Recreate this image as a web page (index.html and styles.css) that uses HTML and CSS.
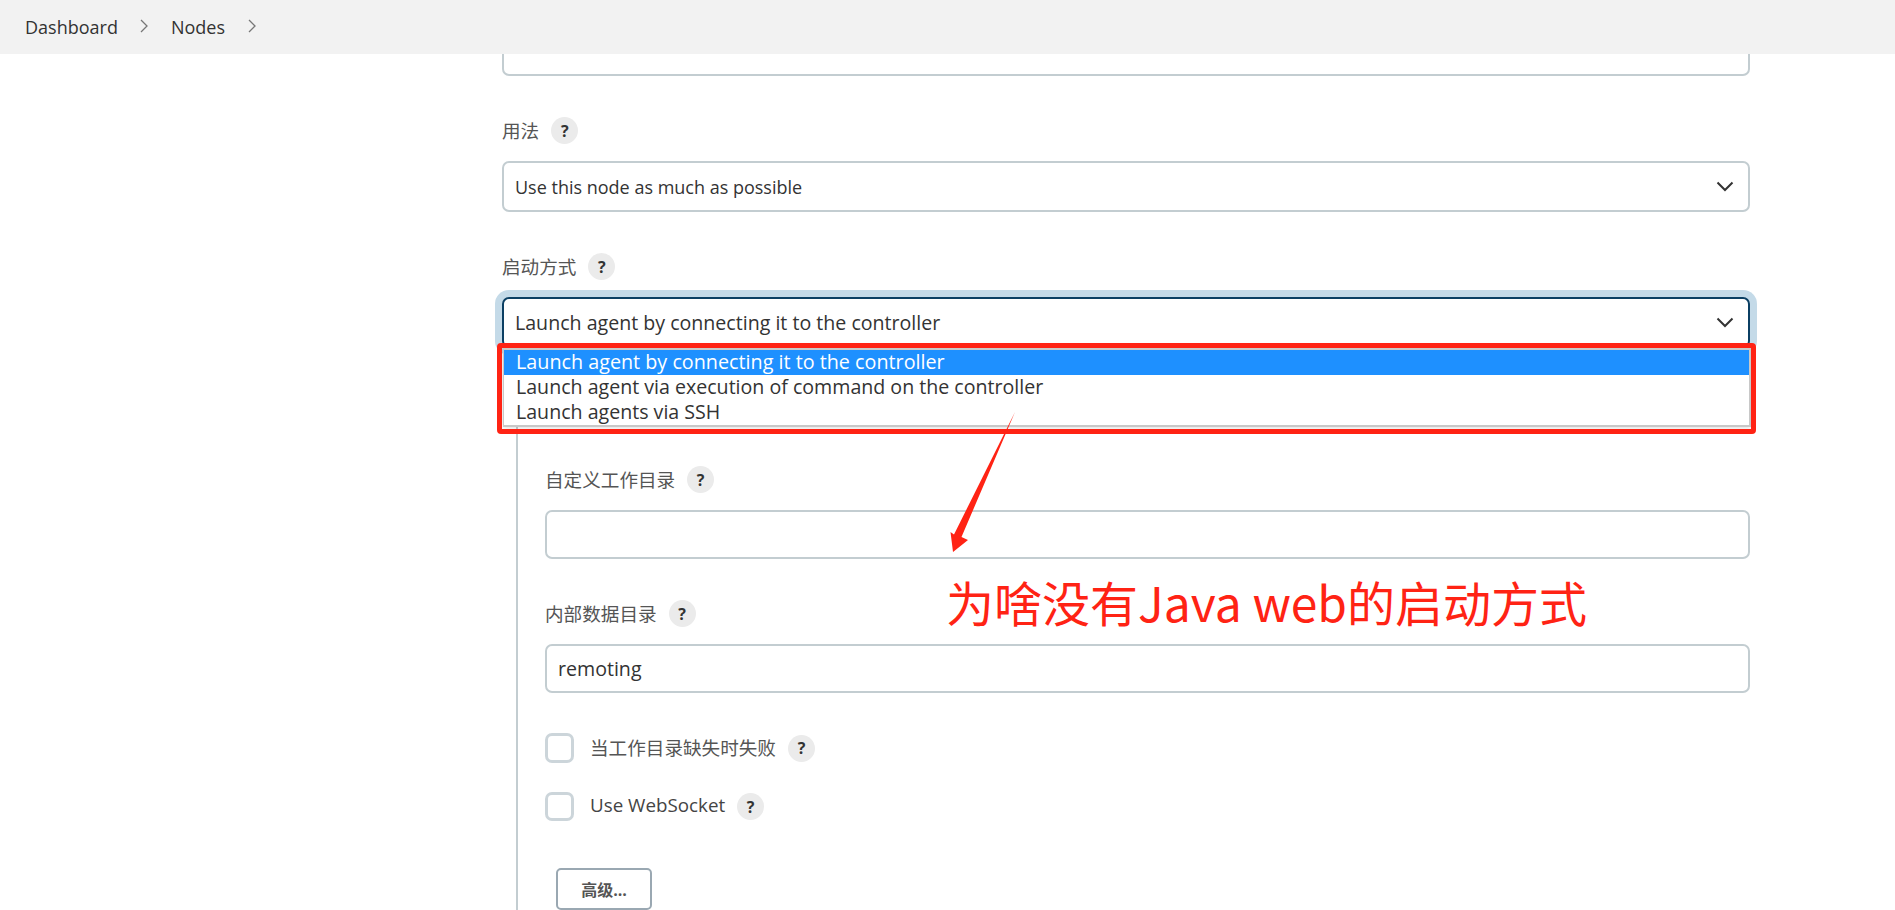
FILE: index.html
```html
<!DOCTYPE html>
<html lang="zh">
<head>
<meta charset="utf-8">
<title>Nodes</title>
<link rel="stylesheet" href="styles.css">
</head>
<body>
<header class="crumbs">
  <a class="crumb">Dashboard</a>
  <svg class="sep" viewBox="0 0 8 14"><path d="M1 1l6 6-6 6"/></svg>
  <a class="crumb">Nodes</a>
  <svg class="sep" viewBox="0 0 8 14"><path d="M1 1l6 6-6 6"/></svg>
</header>
<main class="form">
  <div class="control cut"></div>

  <div class="label-row"><span class="label">用法</span><span class="help">?</span></div>
  <div class="control select">
    <span>Use this node as much as possible</span>
    <svg class="chev" viewBox="0 0 18 11"><path d="M1.5 1.5L9 9l7.5-7.5"/></svg>
  </div>

  <div class="label-row"><span class="label">启动方式</span><span class="help">?</span></div>
  <div class="select-wrap">
    <div class="control select focus">
      <span class="wide">Launch agent by connecting it to the controller</span>
      <svg class="chev" viewBox="0 0 18 11"><path d="M1.5 1.5L9 9l7.5-7.5"/></svg>
    </div>
    <ul class="dropdown">
      <li class="on">Launch agent by connecting it to the controller</li>
      <li>Launch agent via execution of command on the controller</li>
      <li>Launch agents via SSH</li>
    </ul>
  </div>

  <section class="nested">
    <div class="label-row first"><span class="label">自定义工作目录</span><span class="help">?</span></div>
    <div class="control short"></div>

    <div class="label-row"><span class="label">内部数据目录</span><span class="help">?</span></div>
    <div class="control short value">remoting</div>

    <div class="check-row one"><span class="box"></span><span class="label">当工作目录缺失时失败</span><span class="help">?</span></div>
    <div class="check-row two"><span class="box"></span><span class="label latin">Use WebSocket</span><span class="help">?</span></div>

    <button class="adv" type="button">高级...</button>
  </section>
</main>

<div class="marks">
  <div class="red-box"></div>
  <svg class="arrow" viewBox="0 0 1895 910"><polygon points="1015,412 961.5,537 968,540 953,552 950.5,532 954,534.5"/></svg>
  <div class="note">为啥没有Java web的启动方式</div>
</div>
</body>
</html>
```
FILE: styles.css
```css
* { box-sizing: border-box; }
html, body { margin: 0; height: 910px; overflow: hidden; background: #fff; }
body {
  position: relative;
  font-family: "Open Sans", "Noto Sans CJK SC", sans-serif;
  font-size: 18px;
  color: #333;
}
.crumbs {
  position: relative;
  z-index: 2;
  height: 54px;
  background: #f2f2f2;
  display: flex;
  align-items: center;
  padding-left: 25px;
}
.crumb { color: #333; font-size: 18px; }
.sep { width: 8px; height: 14px; margin: 0 22.5px 2px; flex: none; }
.sep path { fill: none; stroke: #777; stroke-width: 1.3; }

.form { width: 1248px; margin: -29px 0 0 502px; }
.control {
  height: 51px;
  border: 2px solid #c3cdd1;
  border-radius: 7px;
  background: #fff;
  display: flex;
  align-items: center;
  padding: 0 11px;
}
.select { justify-content: space-between; }
.wide, .value, .dropdown li { font-size: 19.6px; }
.chev { width: 18px; height: 11px; margin-right: 3px; }
.chev path { fill: none; stroke: #333; stroke-width: 2; }
.focus { border-color: #0b3f63; box-shadow: 0 0 0 7px #c4dae8; }

.label-row { display: flex; align-items: center; height: 27px; margin: 41px 0 17px; }
.label { font-size: 18.6px; color: #555; position: relative; top: -1px; }
.help {
  width: 27px; height: 27px; margin-left: 12px; border-radius: 50%;
  background: #ebebeb; color: #333; font-size: 16px; font-weight: 700;
  display: flex; align-items: center; justify-content: center;
}

.select-wrap { position: relative; }
.dropdown {
  position: absolute; z-index: 1;
  top: 51px; left: 1px; right: -1px;
  margin: 0; padding: 0; list-style: none;
  background: #fff;
  border: 2px solid #c8c8c8;
  border-left-width: 1px;
  box-shadow: 0 0 6px rgba(0, 0, 0, .18);
}
.dropdown li { height: 25px; line-height: 24px; padding-left: 12px; white-space: nowrap; }
.dropdown .on { background: #1e90ff; color: #fff; font-size: 19.75px; }

.nested { margin-left: 14px; padding-left: 27px; border-left: 2px solid #c3cdd1; height: 562px; overflow: hidden; }
.label-row.first { margin-top: 118px; }
.short { height: 49px; }
.check-row { display: flex; align-items: center; }
.check-row .label { top: -2px; }
.check-row .latin { font-size: 18.8px; color: #444; }
.check-row.one { margin-top: 40px; height: 30px; }
.check-row.two { margin-top: 29px; height: 29px; }
.box { width: 29px; height: 100%; border: 3px solid #ccd5da; border-radius: 7px; margin-right: 16px; flex: none; }
.adv {
  display: block;
  margin: 47px 0 0 11px;
  width: 96px; height: 42px;
  border: 2px solid #9aa8b2; border-radius: 5px;
  background: #fff; color: #555;
  font: 700 16px "Open Sans", "Noto Sans CJK SC", sans-serif;
  padding: 0;
}

.marks { position: absolute; inset: 0; z-index: 3; pointer-events: none; }
.red-box {
  position: absolute; left: 497px; top: 343px; width: 1259px; height: 91px;
  border: 5px solid #ff2314; border-radius: 4px;
}
.arrow { position: absolute; left: 0; top: 0; width: 1895px; height: 910px; }
.arrow polygon { fill: #ff2314; }
.note {
  position: absolute; left: 946px; top: 569px;
  font: 48px/64px "Noto Sans CJK SC", sans-serif;
  color: #ff2314; white-space: nowrap;
}
```
